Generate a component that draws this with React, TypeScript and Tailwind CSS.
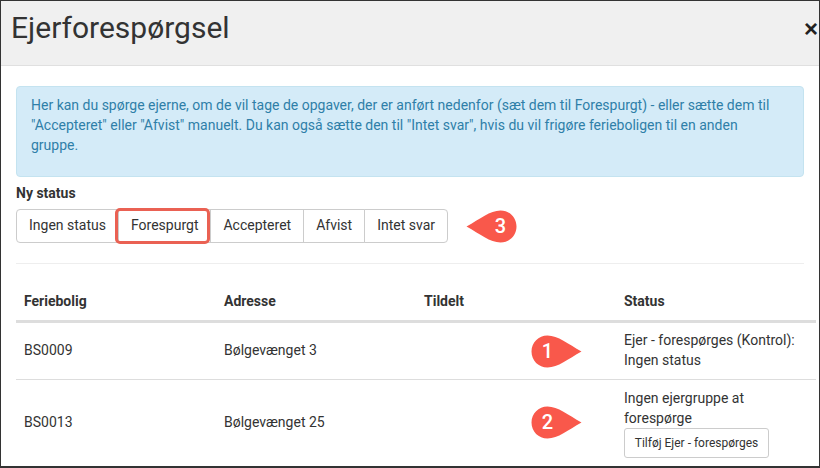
import React from 'react';

const statuses = ['Ingen status', 'Forespurgt', 'Accepteret', 'Afvist', 'Intet svar'];

function Marker({ n, dir, className }: { n: number; dir: 'left' | 'right'; className: string }) {
  return (
    <div className={`absolute w-[51px] h-[33px] ${className}`}>
      <svg width="51" height="33" viewBox="0 0 51 33" className="absolute left-0 top-0">
        {dir === 'right' ? (
          <path d="M16.5 0.5C27 0.5 37 9 50.5 16.5C37 24 27 32.5 16.5 32.5C7.5 32.5 0.5 25.5 0.5 16.5C0.5 7.5 7.5 0.5 16.5 0.5Z" fill="#f9584b" />
        ) : (
          <path d="M34.5 0.5C24 0.5 14 9 0.5 16.5C14 24 24 32.5 34.5 32.5C43.5 32.5 50.5 25.5 50.5 16.5C50.5 7.5 43.5 0.5 34.5 0.5Z" fill="#f9584b" />
        )}
      </svg>
      <span
        className={`absolute top-0 h-[33px] w-[33px] text-center text-[20px] leading-[33px] font-medium text-white ${
          dir === 'right' ? 'left-0' : 'right-0'
        }`}
      >
        {n}
      </span>
    </div>
  );
}

export default function App() {
  return (
    <div className="relative w-[820px] h-[468px] overflow-hidden bg-white border border-[#333] border-b-2 font-['Roboto',sans-serif] text-[14px] leading-[20px] text-[#333]">
      <div className="flex items-center justify-between h-[65px] bg-[#f0f0f0] border-b border-[#e0e0e0] pl-[10px] pr-[1px]">
        <h1 className="text-[30px] leading-[36px] font-normal -mt-[10px]">Ejerforespørgsel</h1>
        <span className="text-[24px] leading-[24px] font-bold text-[#222] -mt-[8px] font-['Liberation_Sans',sans-serif]">×</span>
      </div>

      <div className="px-[15px] pt-[20px]">
        <div className="h-[91px] pl-[14px] pr-[15px] pt-[8px] bg-[#d4ebf8] border border-[#c4e3f0] rounded text-[#2f7fa8]">
          Her kan du spørge ejerne, om de vil tage de opgaver, der er anført nedenfor (sæt dem til Forespurgt) - eller sætte dem til
          "Accepteret" eller "Afvist" manuelt. Du kan også sætte den til "Intet svar", hvis du vil frigøre ferieboligen til en anden
          gruppe.
        </div>

        <div className="mt-[6px] mb-[6px] leading-[20px] font-bold">Ny status</div>
        <div className="flex">
          {statuses.map((s, i) => (
            <button
              key={s}
              className="relative h-[34px] px-[12px] pb-[2px] bg-white border border-[#ccc] -ml-px first:ml-0 first:rounded-l last:rounded-r"
            >
              {s}
              {i === 1 && (
                <span className="absolute -left-[4px] right-0 -top-[2px] -bottom-[2px] border-[3px] border-[#ea6153] rounded-[5px]" />
              )}
            </button>
          ))}
        </div>

        <div className="mt-[20px] border-t border-[#eee]" />

        <table className="mt-[27px] w-[800px] table-fixed border-collapse">
          <thead>
            <tr className="border-b-[3px] border-[#ddd]">
              <th className="w-[200px] h-[30px] px-2 text-left align-top font-bold">Feriebolig</th>
              <th className="w-[200px] px-2 text-left align-top font-bold">Adresse</th>
              <th className="w-[200px] px-2 text-left align-top font-bold">Tildelt</th>
              <th className="w-[200px] px-2 text-left align-top font-bold">Status</th>
            </tr>
          </thead>
          <tbody>
            <tr className="border-b border-[#ddd]">
              <td className="px-2 pb-[2px] h-[58px]">BS0009</td>
              <td className="px-2 pb-[2px]">Bølgevænget 3</td>
              <td className="px-2 pb-[2px]"></td>
              <td className="px-2 pb-[2px]">
                Ejer - forespørges (Kontrol):
                <br />
                Ingen status
              </td>
            </tr>
            <tr className="border-b border-[#ddd]">
              <td className="px-2 pb-[2px] h-[87px]">BS0013</td>
              <td className="px-2 pb-[2px]">Bølgevænget 25</td>
              <td className="px-2 pb-[2px]"></td>
              <td className="px-2 pt-[1px] pb-[1px]">
                Ingen ejergruppe at
                <br />
                forespørge
                <button className="block h-[30px] w-[145px] bg-white border border-[#ccc] rounded-[3px] text-[12px] leading-[18px]">
                  Tilføj Ejer - forespørges
                </button>
              </td>
            </tr>
          </tbody>
        </table>
      </div>

      <Marker n={3} dir="left" className="left-[465px] top-[209px]" />
      <Marker n={1} dir="right" className="left-[530px] top-[334px]" />
      <Marker n={2} dir="right" className="left-[530px] top-[405px]" />
    </div>
  );
}
